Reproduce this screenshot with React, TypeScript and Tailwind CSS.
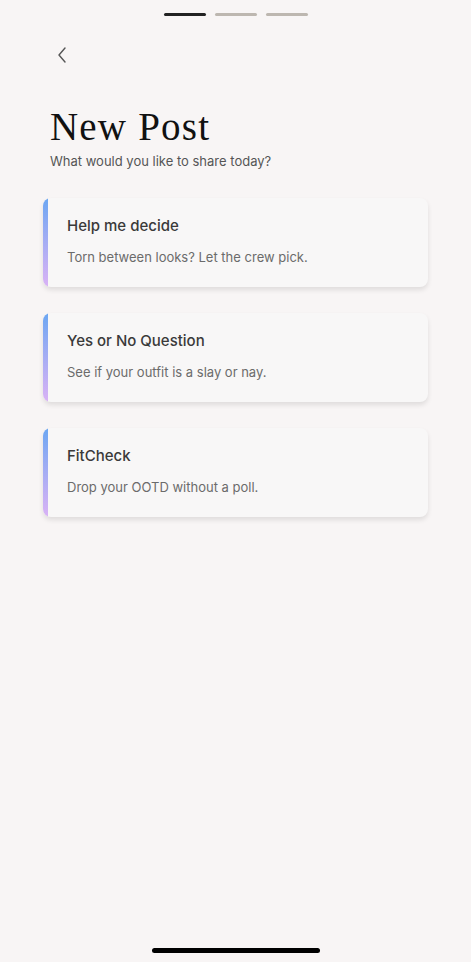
const options = [
  { title: "Help me decide", desc: "Torn between looks? Let the crew pick." },
  { title: "Yes or No Question", desc: "See if your outfit is a slay or nay." },
  { title: "FitCheck", desc: "Drop your OOTD without a poll." },
];

const OptionCard = ({ title, desc }: { title: string; desc: string }) => (
  <div className="flex h-[89px] rounded-[8px] bg-[#f8f7f7] shadow-[0_3px_5px_rgba(0,0,0,0.1)] overflow-hidden">
    <div className="w-[5px] shrink-0 rounded-l-[8px] bg-gradient-to-b from-[#6aa6f2] to-[#d9b2f5]" />
    <div className="flex flex-col pl-[19px] pt-[18px]">
      <div className="text-[15px] leading-[20px] text-[#3a3a3a] font-medium">{title}</div>
      <div className="mt-[12px] text-[13px] leading-[18px] text-[#6b6b6b]">{desc}</div>
    </div>
  </div>
);

const App = () => {
  return (
    <div
      className="relative w-[471px] h-[962px] bg-[#f8f5f5] overflow-hidden"
      style={{ fontFamily: "Inter, 'Noto Sans', sans-serif" }}
    >
      {/* step indicator */}
      <div className="flex justify-center gap-[9px] pt-[13px]">
        <div className="w-[42px] h-[3px] rounded-full bg-[#222222]" />
        <div className="w-[42px] h-[3px] rounded-full bg-[#bdb7b0]" />
        <div className="w-[42px] h-[3px] rounded-full bg-[#bdb7b0]" />
      </div>

      <div className="pl-[56px] pt-[30px]">
        <svg width="12" height="18" viewBox="0 0 12 18" fill="none">
          <path d="M9 2L3 9l6 7" stroke="#555" strokeWidth="1.4" strokeLinecap="round" strokeLinejoin="round" />
        </svg>
      </div>

      <div className="px-[50px] pt-[41px]">
        <h1
          className="text-[39px] leading-[44px] text-[#111] tracking-[1.2px]"
          style={{ fontFamily: "'Liberation Serif', 'DejaVu Serif', serif" }}
        >
          New Post
        </h1>
        <p className="mt-[3px] text-[13px] leading-[18px] text-[#555]">What would you like to share today?</p>
      </div>

      <div className="flex flex-col gap-[26px] ml-[43px] mr-[43px] mt-[28px]">
        {options.map((o) => (
          <OptionCard key={o.title} title={o.title} desc={o.desc} />
        ))}
      </div>

      {/* home indicator */}
      <div className="absolute bottom-[9px] left-[152px] w-[168px] h-[5px] rounded-full bg-black" />
    </div>
  );
};

export default App;
